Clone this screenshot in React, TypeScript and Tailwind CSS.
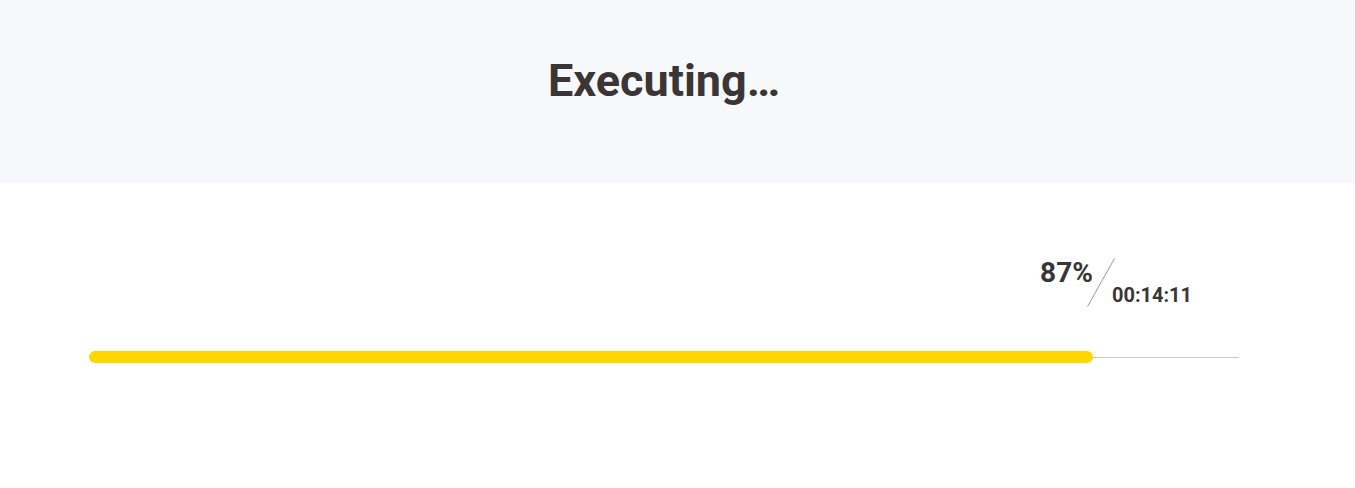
export default function App() {
  const percent = 87;
  const elapsed = "00:14:11";

  return (
    <main className="min-h-[488px] bg-white font-['Roboto',sans-serif] text-[#3b3636]">
      <header className="h-[183px] bg-[#f7f8fa] pt-[54px]">
        <div className="ml-[89px] w-[1150px] flex justify-center">
          <h1 className="text-[45px] font-bold leading-[54px]">Executing…</h1>
        </div>
      </header>

      <section className="ml-[89px] w-[1150px] pt-[75px]">
        <div className="flex items-start">
          <div className="w-[87.3%] flex justify-end pt-[1px]">
            <span className="text-[28px] font-bold leading-none">{percent}%</span>
          </div>
          <svg className="ml-[-6px] shrink-0" width="28" height="49" viewBox="0 0 28 49">
            <line x1="0.5" y1="48.5" x2="27.5" y2="0.5" stroke="#9a9a9a" strokeWidth="1" />
          </svg>
          <span className="ml-[-3px] mt-[27px] text-[20px] font-bold leading-none whitespace-nowrap">
            {elapsed}
          </span>
        </div>

        <div className="mt-[44px] flex items-center h-[12px]">
          <div className="w-[87.3%] h-[12px] rounded-full bg-[#ffd700]"></div>
          <div className="flex-1 h-px bg-[#c8c8cc]"></div>
        </div>
      </section>
    </main>
  );
}
